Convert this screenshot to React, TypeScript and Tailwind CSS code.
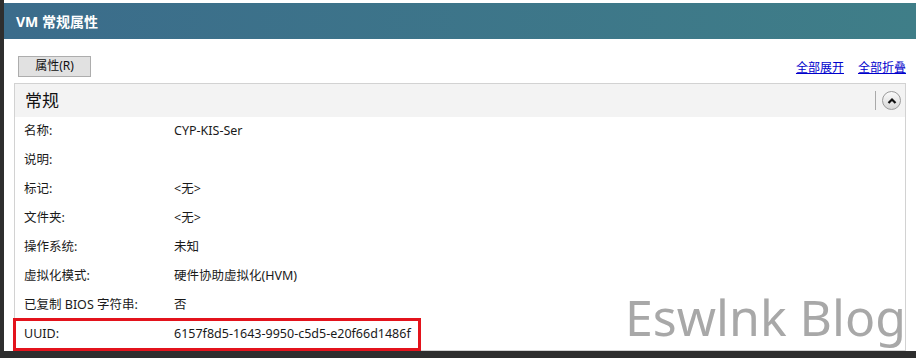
import React from "react";

const rows: { label: string; value: string }[] = [
  { label: "名称:", value: "CYP-KIS-Ser" },
  { label: "说明:", value: "" },
  { label: "标记:", value: "<无>" },
  { label: "文件夹:", value: "<无>" },
  { label: "操作系统:", value: "未知" },
  { label: "虚拟化模式:", value: "硬件协助虚拟化(HVM)" },
  { label: "已复制 BIOS 字符串:", value: "否" },
  { label: "UUID:", value: "6157f8d5-1643-9950-c5d5-e20f66d1486f" },
];

export default function App() {
  return (
    <div
      className="w-[916px] h-[358px] bg-[#2e2e2e] flex overflow-hidden"
      style={{ fontFamily: '"Noto Sans", "Noto Sans CJK SC", sans-serif' }}
    >
      <div className="relative ml-[4px] flex-1 h-[351px] bg-white flex flex-col pt-[3px]">
        <div className="h-[36px] flex items-center pl-[12px] bg-gradient-to-r from-[#3b6c8b] to-[#3f7e88]">
          <span className="text-white font-bold text-[14px]">VM 常规属性</span>
        </div>

        <div className="h-[44px] flex items-center justify-between pl-[14px] pr-[10px]">
          <button className="h-[21px] w-[73px] mt-[10px] bg-[#e1e1e1] border border-[#adadad] text-[12px] text-[#111] leading-none">
            属性(R)
          </button>
          <div className="flex gap-[14px] mt-[13px] text-[12px] text-[#0000cc] underline">
            <span>全部展开</span>
            <span>全部折叠</span>
          </div>
        </div>

        <div className="mx-[10px] border border-[#d2d2d2] flex-1 flex flex-col">
          <div className="h-[33px] bg-[#f3f3f3] flex items-center justify-between pl-[10px] pr-[4px]">
            <span className="text-[17px] text-[#111]">常规</span>
            <div className="flex items-center gap-[6px]">
              <span className="w-px h-[19px] bg-[#a9a9a9]" />
              <span className="w-[19px] h-[19px] rounded-full border border-[#9a9a9a] bg-gradient-to-b from-[#fafafa] to-[#d8d8d8] flex items-center justify-center">
                <svg width="10" height="8" viewBox="0 0 10 8">
                  <path d="M1.5 6 L5 2.5 L8.5 6" fill="none" stroke="#111" strokeWidth="2.2" />
                </svg>
              </span>
            </div>
          </div>
          {rows.map((r, i) => (
            <div key={i} className="relative h-[29px] flex items-center text-[12.5px] text-[#1a1a1a]">
              <span className="w-[159px] pl-[9px]">{r.label}</span>
              <span>{r.value}</span>
              {r.label === "UUID:" && (
                <span className="absolute left-[-2px] top-[-2px] w-[408px] h-[33px] border-[3px] border-[#e3131c]" />
              )}
            </div>
          ))}
        </div>

        <div className="absolute right-[10px] bottom-[9px] text-[50px] leading-none text-[#a8a8a8]">
          Eswlnk Blog
        </div>
      </div>
    </div>
  );
}
